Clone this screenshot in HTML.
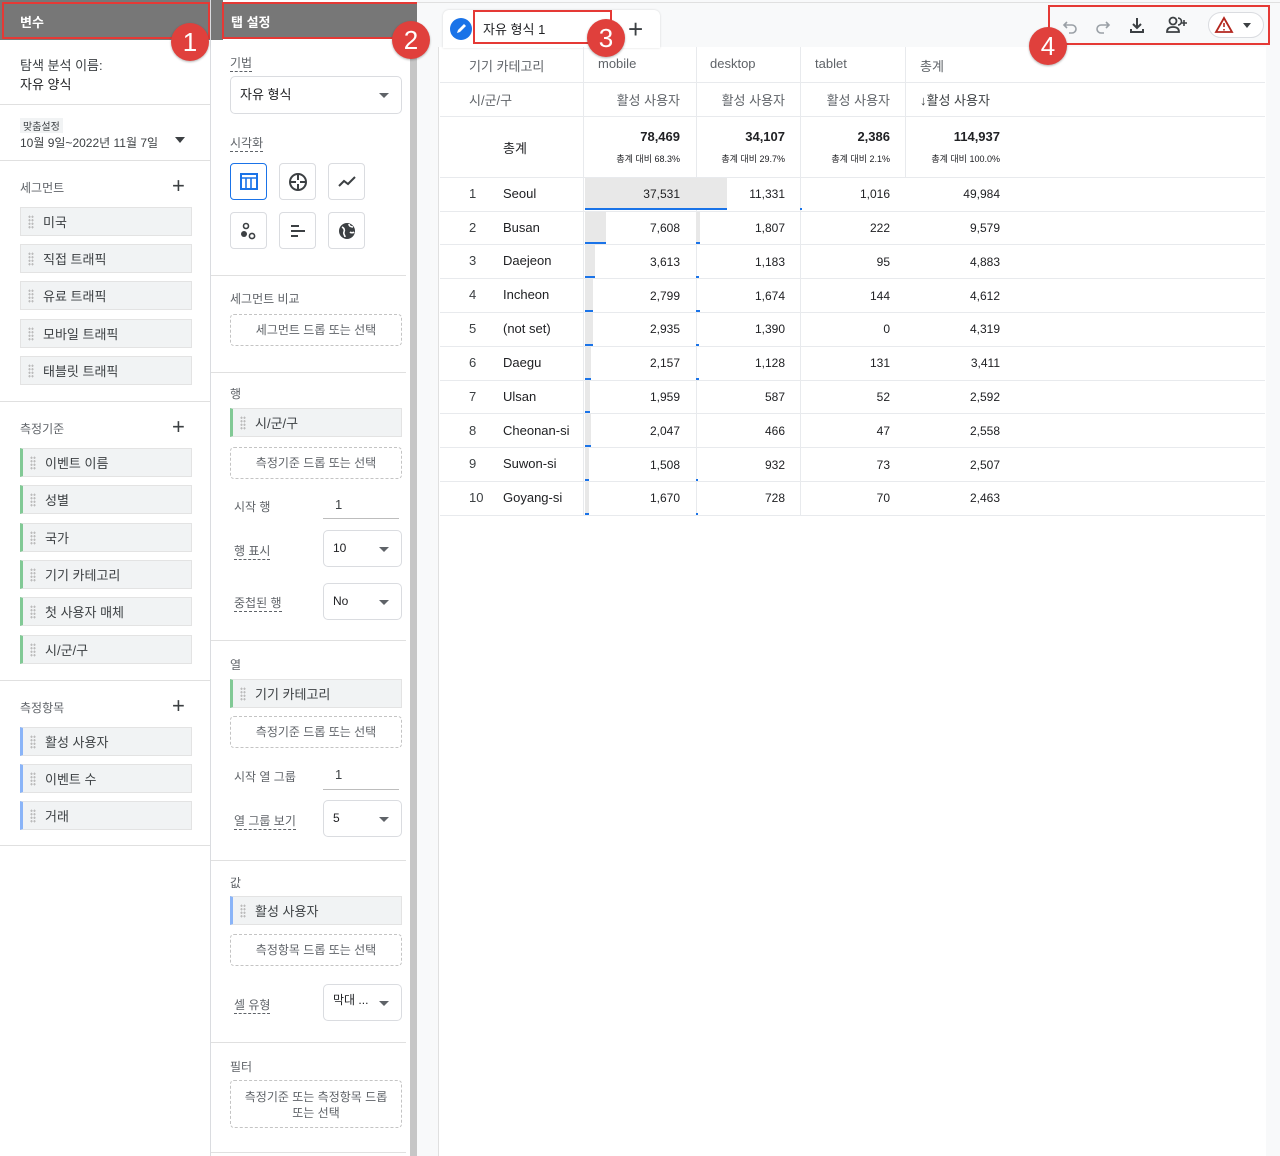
<!DOCTYPE html>
<html><head><meta charset="utf-8">
<style>
*{box-sizing:border-box;margin:0;padding:0}
body{width:1280px;height:1156px;position:relative;overflow:hidden;background:#fff;font-family:"Liberation Sans","Noto Sans CJK KR",sans-serif;font-size:13px;color:#3c4043}
.a{position:absolute;white-space:nowrap}
.hdr{position:absolute;background:#777;color:#fff;font-weight:bold;font-size:13px;border:2px solid #e53935;padding:8px 0 0 16px}
.badge{position:absolute;width:38px;height:38px;border-radius:50%;background:#e0403c;color:#fff;font-size:26px;text-align:center;line-height:38px;box-shadow:0 1px 2px rgba(0,0,0,.3)}
.div{position:absolute;height:1px;background:#e0e0e0}
.lbl{font-size:12px;color:#5f6368}
.item{position:absolute;height:29px;background:#f1f3f4;border:1px solid #e3e3e3;font-size:13px;color:#3c4043;padding:4px 0 0 22px}
.item:before{content:"";position:absolute;left:7px;top:7px;width:6px;height:14px;background:radial-gradient(circle,#bbb 1px,transparent 1.2px) 0 0/3px 3.5px}
.g{border-left:3px solid #81c995}
.b{border-left:3px solid #8ab4f8}
.dash{position:absolute;border:1px dashed #c4c4c4;border-radius:4px;text-align:center;font-size:12px;color:#5f6368}
.sel{position:absolute;border:1px solid #dadce0;border-radius:5px;padding-left:9px;font-size:12px;color:#202124}
.sel:after{content:"";position:absolute;right:12px;top:50%;margin-top:-2px;border:5px solid transparent;border-top:5px solid #5f6368}
.ul{border-bottom:1px dashed #5f6368;padding-bottom:1px}
.ib{position:absolute;width:37px;height:37px;border:1px solid #dadce0;border-radius:4px}
.plus{position:absolute;font-size:22px;color:#3c4043;line-height:20px;font-weight:300}
.hl{position:absolute;left:440px;width:825px;height:1px;background:#e8eaed}
.vl{position:absolute;width:1px;background:#e8eaed}
.num{position:absolute;text-align:right;font-size:12px;color:#202124}
.bar{position:absolute;background:#e8e8e8}
.bl{position:absolute;height:2px;background:#1a73e8}
</style></head><body>

<!-- left panel -->
<div class="a" style="left:0;top:0;width:211px;height:40px;background:#777"></div>
<div class="a" style="left:211px;top:0;width:12px;height:40px;background:#777"></div>
<div class="a" style="left:210px;top:0;width:1px;height:1156px;background:#dadce0"></div>
<div class="hdr" style="left:2px;top:2px;width:208px;height:37px">변수</div>
<div class="a" style="left:20px;top:55px">탐색 분석 이름:</div>
<div class="a" style="left:20px;top:74px;color:#202124">자유 양식</div>
<div class="div" style="left:0;top:104px;width:210px"></div>
<div class="a" style="left:20px;top:118px;font-size:10px;background:#f1f3f4;padding:0 3px;color:#3c4043">맞춤설정</div>
<div class="a" style="left:20px;top:134px;font-size:12px;color:#3c4043">10월 9일~2022년 11월 7일</div>
<div class="a" style="left:175px;top:137px;border:5px solid transparent;border-top:6px solid #3c4043"></div>
<div class="div" style="left:0;top:160px;width:210px"></div>
<div class="a lbl" style="left:20px;top:179px">세그먼트</div><div class="plus" style="left:172px;top:176px">+</div>
<div class="item" style="left:20px;top:207px;width:172px">미국</div>
<div class="item" style="left:20px;top:244px;width:172px">직접 트래픽</div>
<div class="item" style="left:20px;top:281px;width:172px">유료 트래픽</div>
<div class="item" style="left:20px;top:319px;width:172px">모바일 트래픽</div>
<div class="item" style="left:20px;top:356px;width:172px">태블릿 트래픽</div>
<div class="div" style="left:0;top:401px;width:210px"></div>
<div class="a lbl" style="left:20px;top:420px">측정기준</div><div class="plus" style="left:172px;top:417px">+</div>
<div class="item g" style="left:20px;top:448px;width:172px">이벤트 이름</div>
<div class="item g" style="left:20px;top:485px;width:172px">성별</div>
<div class="item g" style="left:20px;top:523px;width:172px">국가</div>
<div class="item g" style="left:20px;top:560px;width:172px">기기 카테고리</div>
<div class="item g" style="left:20px;top:597px;width:172px">첫 사용자 매체</div>
<div class="item g" style="left:20px;top:635px;width:172px">시/군/구</div>
<div class="div" style="left:0;top:680px;width:210px"></div>
<div class="a lbl" style="left:20px;top:699px">측정항목</div><div class="plus" style="left:172px;top:696px">+</div>
<div class="item b" style="left:20px;top:727px;width:172px">활성 사용자</div>
<div class="item b" style="left:20px;top:764px;width:172px">이벤트 수</div>
<div class="item b" style="left:20px;top:801px;width:172px">거래</div>
<div class="div" style="left:0;top:845px;width:210px"></div>

<!-- panel 2 -->
<div class="hdr" style="left:222px;top:2px;width:198px;height:37px;padding-left:7px">탭 설정</div>
<div class="a" style="left:410px;top:40px;width:7px;height:1116px;background:#c6c6c6"></div>
<div class="a" style="left:417px;top:0;width:21px;height:1156px;background:#f8f9fa"></div>
<div class="a lbl" style="left:230px;top:54px"><span class="ul">기법</span></div>
<div class="sel" style="left:230px;top:76px;width:172px;height:38px;line-height:36px;font-size:13px">자유 형식</div>
<div class="a lbl" style="left:230px;top:134px"><span class="ul">시각화</span></div>
<div class="ib" style="left:230px;top:163px;border-color:#1a73e8"><svg width="37" height="37" viewBox="0 0 37 37"><rect x="10" y="10" width="16" height="15" fill="none" stroke="#1a73e8" stroke-width="2"/><path d="M10 14h16M15 14v11M20 14v11" stroke="#1a73e8" stroke-width="1.6"/></svg></div>
<div class="ib" style="left:279px;top:163px"><svg width="37" height="37" viewBox="0 0 37 37"><circle cx="18" cy="18" r="8" fill="none" stroke="#3c4043" stroke-width="2"/><path d="M18 10v6M18 20v6M10 18h6M20 18h6" stroke="#3c4043" stroke-width="2"/></svg></div>
<div class="ib" style="left:328px;top:163px"><svg width="37" height="37" viewBox="0 0 37 37"><path d="M10 22l5-5 4 3 7-7" fill="none" stroke="#3c4043" stroke-width="2"/></svg></div>
<div class="ib" style="left:230px;top:212px"><svg width="37" height="37" viewBox="0 0 37 37"><circle cx="15" cy="13" r="2.5" fill="none" stroke="#3c4043" stroke-width="1.6"/><circle cx="13" cy="21" r="3" fill="#3c4043"/><circle cx="21" cy="23" r="2.6" fill="none" stroke="#3c4043" stroke-width="1.6"/></svg></div>
<div class="ib" style="left:279px;top:212px"><svg width="37" height="37" viewBox="0 0 37 37"><path d="M11 13h8M11 18h14M11 23h7" stroke="#3c4043" stroke-width="2"/></svg></div>
<div class="ib" style="left:328px;top:212px"><svg width="37" height="37" viewBox="0 0 37 37"><circle cx="18" cy="18" r="8" fill="#3c4043"/><path d="M13 14c2 1 3 3 2 5s1 3 1 5M20 11c0 2 2 3 4 3M21 19c1 1 3 1 4 0" stroke="#fff" stroke-width="1.6" fill="none"/></svg></div>
<div class="div" style="left:211px;top:275px;width:195px"></div>
<div class="a lbl" style="left:230px;top:290px">세그먼트 비교</div>
<div class="dash" style="left:230px;top:314px;width:172px;height:32px;line-height:30px">세그먼트 드롭 또는 선택</div>
<div class="div" style="left:211px;top:372px;width:195px"></div>
<div class="a lbl" style="left:230px;top:385px">행</div>
<div class="item g" style="left:230px;top:408px;width:172px">시/군/구</div>
<div class="dash" style="left:230px;top:447px;width:172px;height:32px;line-height:30px">측정기준 드롭 또는 선택</div>
<div class="a lbl" style="left:234px;top:498px">시작 행</div>
<div class="a" style="left:335px;top:497px;font-size:13px">1</div>
<div class="a" style="left:323px;top:518px;width:76px;height:1px;background:#bdbdbd"></div>
<div class="a lbl" style="left:234px;top:542px"><span class="ul">행 표시</span></div>
<div class="sel" style="left:323px;top:530px;width:79px;height:37px;line-height:35px">10</div>
<div class="a lbl" style="left:234px;top:594px"><span class="ul">중첩된 행</span></div>
<div class="sel" style="left:323px;top:583px;width:79px;height:37px;line-height:35px">No</div>
<div class="div" style="left:211px;top:640px;width:195px"></div>
<div class="a lbl" style="left:230px;top:656px">열</div>
<div class="item g" style="left:230px;top:679px;width:172px">기기 카테고리</div>
<div class="dash" style="left:230px;top:716px;width:172px;height:32px;line-height:30px">측정기준 드롭 또는 선택</div>
<div class="a lbl" style="left:234px;top:768px">시작 열 그룹</div>
<div class="a" style="left:335px;top:767px;font-size:13px">1</div>
<div class="a" style="left:323px;top:789px;width:76px;height:1px;background:#bdbdbd"></div>
<div class="a lbl" style="left:234px;top:812px"><span class="ul">열 그룹 보기</span></div>
<div class="sel" style="left:323px;top:800px;width:79px;height:37px;line-height:35px">5</div>
<div class="div" style="left:211px;top:860px;width:195px"></div>
<div class="a lbl" style="left:230px;top:874px">값</div>
<div class="item b" style="left:230px;top:896px;width:172px">활성 사용자</div>
<div class="dash" style="left:230px;top:934px;width:172px;height:32px;line-height:30px">측정항목 드롭 또는 선택</div>
<div class="a lbl" style="left:234px;top:996px"><span class="ul">셀 유형</span></div>
<div class="sel" style="left:323px;top:984px;width:79px;height:37px;line-height:30px;font-size:12px">막대 ...</div>
<div class="div" style="left:211px;top:1042px;width:195px"></div>
<div class="a lbl" style="left:230px;top:1058px">필터</div>
<div class="dash" style="left:230px;top:1080px;width:172px;height:48px;padding-top:8px;line-height:16px;white-space:normal">측정기준 또는 측정항목 드롭<br>또는 선택</div>
<div class="div" style="left:211px;top:1152px;width:195px"></div>

<!-- main -->
<div class="a" style="left:438px;top:0;width:842px;height:47px;background:#f8f9fa"></div>
<div class="a" style="left:417px;top:2px;width:863px;height:1px;background:#e0e0e0"></div>
<div class="a" style="left:1266px;top:47px;width:14px;height:1109px;background:#f8f9fa"></div>
<div class="a" style="left:438px;top:47px;width:1px;height:1109px;background:#e0e0e0"></div>
<div class="a" style="left:443px;top:10px;width:217px;height:38px;background:#fff;border-radius:6px 6px 0 0;box-shadow:0 0 2px rgba(0,0,0,.15)"></div>
<div class="a" style="left:450px;top:18px;width:22px;height:22px;border-radius:50%;background:#1a73e8"><svg width="22" height="22" viewBox="0 0 22 22"><path d="M7 15l1-3 6-6 2 2-6 6z" fill="#fff"/></svg></div>
<div class="a" style="left:473px;top:10px;width:139px;height:34px;border:2px solid #e53935"></div>
<div class="a" style="left:483px;top:19px;color:#202124">자유 형식 1</div>
<div class="plus" style="left:628px;top:19px;font-size:26px">+</div>
<div class="a" style="left:1048px;top:5px;width:222px;height:40px;border:2px solid #e53935"></div>
<svg class="a" style="left:1060px;top:16px" width="20" height="20" viewBox="0 0 20 20"><path d="M7 6L4 9l3 3M4 9h8a4 4 0 010 8H9" fill="none" stroke="#9aa0a6" stroke-width="1.6"/></svg>
<svg class="a" style="left:1093px;top:16px" width="20" height="20" viewBox="0 0 20 20"><path d="M13 6l3 3-3 3M16 9H8a4 4 0 000 8h3" fill="none" stroke="#9aa0a6" stroke-width="1.6"/></svg>
<svg class="a" style="left:1127px;top:15px" width="20" height="20" viewBox="0 0 20 20"><path d="M10 3v10M6 9l4 4 4-4M4 14v3h12v-3" fill="none" stroke="#3c4043" stroke-width="2"/></svg>
<svg class="a" style="left:1165px;top:15px" width="24" height="20" viewBox="0 0 24 20"><circle cx="8" cy="6" r="3.5" fill="none" stroke="#3c4043" stroke-width="1.8"/><path d="M2 17c0-4 3-5 6-5s6 1 6 5z" fill="none" stroke="#3c4043" stroke-width="1.8"/><path d="M13 3a3.5 3.5 0 010 7M19 5v6M16 8h6" stroke="#3c4043" stroke-width="1.6" fill="none"/></svg>
<div class="a" style="left:1208px;top:12px;width:56px;height:26px;border:1px solid #dadce0;border-radius:13px;background:#fff"></div>
<svg class="a" style="left:1214px;top:16px" width="20" height="18" viewBox="0 0 20 18"><path d="M10 2L18 16H2z" fill="none" stroke="#b3261e" stroke-width="1.8"/><path d="M10 7v4M10 13v1.5" stroke="#b3261e" stroke-width="1.6"/></svg>
<div class="a" style="left:1243px;top:23px;border:4px solid transparent;border-top:5px solid #3c4043"></div>

<div class="badge" style="left:171px;top:23px">1</div>
<div class="badge" style="left:392px;top:21px">2</div>
<div class="badge" style="left:587px;top:19px">3</div>
<div class="badge" style="left:1029px;top:27px">4</div>

<!-- table lines -->
<div class="hl" style="top:82px"></div><div class="hl" style="top:116px"></div><div class="hl" style="top:177px"></div>
<div class="hl" style="top:211px"></div><div class="hl" style="top:244px"></div><div class="hl" style="top:278px"></div><div class="hl" style="top:312px"></div><div class="hl" style="top:346px"></div><div class="hl" style="top:380px"></div><div class="hl" style="top:413px"></div><div class="hl" style="top:447px"></div><div class="hl" style="top:481px"></div><div class="hl" style="top:515px"></div>
<div class="vl" style="left:583px;top:47px;height:130px"></div>
<div class="vl" style="left:696px;top:47px;height:130px"></div>
<div class="vl" style="left:800px;top:47px;height:130px"></div>
<div class="vl" style="left:905px;top:47px;height:130px"></div>
<div class="vl" style="left:583px;top:177px;height:338px"></div>
<div class="vl" style="left:696px;top:177px;height:338px"></div>
<div class="vl" style="left:800px;top:177px;height:338px"></div>

<div class="a" style="left:469px;top:56px;color:#5f6368">기기 카테고리</div>
<div class="a" style="left:598px;top:56px;color:#5f6368">mobile</div>
<div class="a" style="left:710px;top:56px;color:#5f6368">desktop</div>
<div class="a" style="left:815px;top:56px;color:#5f6368">tablet</div>
<div class="a" style="left:920px;top:56px;color:#5f6368">총계</div>
<div class="a" style="left:469px;top:90px;color:#5f6368">시/군/구</div>
<div class="num" style="left:580px;width:100px;top:90px;font-size:13px;color:#5f6368">활성 사용자</div>
<div class="num" style="left:685px;width:100px;top:90px;font-size:13px;color:#5f6368">활성 사용자</div>
<div class="num" style="left:790px;width:100px;top:90px;font-size:13px;color:#5f6368">활성 사용자</div>
<div class="a" style="left:920px;top:90px;color:#3c4043">↓활성 사용자</div>
<div class="a" style="left:503px;top:138px;color:#202124">총계</div>
<div class="num" style="left:580px;width:100px;top:129px;font-weight:bold;font-size:13px">78,469</div>
<div class="num" style="left:685px;width:100px;top:129px;font-weight:bold;font-size:13px">34,107</div>
<div class="num" style="left:790px;width:100px;top:129px;font-weight:bold;font-size:13px">2,386</div>
<div class="num" style="left:900px;width:100px;top:129px;font-weight:bold;font-size:13px">114,937</div>
<div class="num" style="left:580px;width:100px;top:152px;font-size:9px">총계 대비 68.3%</div>
<div class="num" style="left:685px;width:100px;top:152px;font-size:9px">총계 대비 29.7%</div>
<div class="num" style="left:790px;width:100px;top:152px;font-size:9px">총계 대비 2.1%</div>
<div class="num" style="left:900px;width:100px;top:152px;font-size:9px">총계 대비 100.0%</div>

<!-- bars -->
<div class="bar" style="left:585px;top:178px;width:142px;height:31px"></div><div class="bl" style="left:585px;top:208px;width:142px"></div><div class="bl" style="left:800px;top:208px;width:2px"></div>
<div class="bar" style="left:585px;top:212px;width:21px;height:30px"></div><div class="bl" style="left:585px;top:242px;width:21px"></div><div class="bar" style="left:696px;top:212px;width:4px;height:30px"></div><div class="bl" style="left:696px;top:242px;width:4px"></div>
<div class="bar" style="left:585px;top:245px;width:10px;height:31px"></div><div class="bl" style="left:585px;top:276px;width:10px"></div><div class="bl" style="left:696px;top:276px;width:3px"></div>
<div class="bar" style="left:585px;top:279px;width:8px;height:31px"></div><div class="bl" style="left:585px;top:310px;width:8px"></div><div class="bl" style="left:696px;top:310px;width:4px"></div>
<div class="bar" style="left:585px;top:313px;width:8px;height:31px"></div><div class="bl" style="left:585px;top:344px;width:8px"></div><div class="bl" style="left:696px;top:344px;width:3px"></div>
<div class="bar" style="left:585px;top:347px;width:6px;height:31px"></div><div class="bl" style="left:585px;top:378px;width:6px"></div><div class="bl" style="left:696px;top:378px;width:3px"></div>
<div class="bar" style="left:585px;top:381px;width:5px;height:30px"></div><div class="bl" style="left:585px;top:411px;width:5px"></div>
<div class="bar" style="left:585px;top:414px;width:6px;height:31px"></div><div class="bl" style="left:585px;top:445px;width:6px"></div>
<div class="bar" style="left:585px;top:448px;width:4px;height:31px"></div><div class="bl" style="left:585px;top:479px;width:4px"></div><div class="bl" style="left:696px;top:479px;width:2px"></div>
<div class="bar" style="left:585px;top:482px;width:4px;height:31px"></div><div class="bl" style="left:585px;top:513px;width:4px"></div><div class="bl" style="left:696px;top:513px;width:2px"></div>

<!-- rows -->
<div class="a" style="left:469px;top:186px">1</div><div class="a" style="left:503px;top:186px;color:#202124">Seoul</div>
<div class="num" style="left:580px;width:100px;top:187px">37,531</div><div class="num" style="left:685px;width:100px;top:187px">11,331</div><div class="num" style="left:790px;width:100px;top:187px">1,016</div><div class="num" style="left:900px;width:100px;top:187px">49,984</div>
<div class="a" style="left:469px;top:220px">2</div><div class="a" style="left:503px;top:220px;color:#202124">Busan</div>
<div class="num" style="left:580px;width:100px;top:221px">7,608</div><div class="num" style="left:685px;width:100px;top:221px">1,807</div><div class="num" style="left:790px;width:100px;top:221px">222</div><div class="num" style="left:900px;width:100px;top:221px">9,579</div>
<div class="a" style="left:469px;top:253px">3</div><div class="a" style="left:503px;top:253px;color:#202124">Daejeon</div>
<div class="num" style="left:580px;width:100px;top:255px">3,613</div><div class="num" style="left:685px;width:100px;top:255px">1,183</div><div class="num" style="left:790px;width:100px;top:255px">95</div><div class="num" style="left:900px;width:100px;top:255px">4,883</div>
<div class="a" style="left:469px;top:287px">4</div><div class="a" style="left:503px;top:287px;color:#202124">Incheon</div>
<div class="num" style="left:580px;width:100px;top:289px">2,799</div><div class="num" style="left:685px;width:100px;top:289px">1,674</div><div class="num" style="left:790px;width:100px;top:289px">144</div><div class="num" style="left:900px;width:100px;top:289px">4,612</div>
<div class="a" style="left:469px;top:321px">5</div><div class="a" style="left:503px;top:321px;color:#202124">(not set)</div>
<div class="num" style="left:580px;width:100px;top:322px">2,935</div><div class="num" style="left:685px;width:100px;top:322px">1,390</div><div class="num" style="left:790px;width:100px;top:322px">0</div><div class="num" style="left:900px;width:100px;top:322px">4,319</div>
<div class="a" style="left:469px;top:355px">6</div><div class="a" style="left:503px;top:355px;color:#202124">Daegu</div>
<div class="num" style="left:580px;width:100px;top:356px">2,157</div><div class="num" style="left:685px;width:100px;top:356px">1,128</div><div class="num" style="left:790px;width:100px;top:356px">131</div><div class="num" style="left:900px;width:100px;top:356px">3,411</div>
<div class="a" style="left:469px;top:389px">7</div><div class="a" style="left:503px;top:389px;color:#202124">Ulsan</div>
<div class="num" style="left:580px;width:100px;top:390px">1,959</div><div class="num" style="left:685px;width:100px;top:390px">587</div><div class="num" style="left:790px;width:100px;top:390px">52</div><div class="num" style="left:900px;width:100px;top:390px">2,592</div>
<div class="a" style="left:469px;top:423px">8</div><div class="a" style="left:503px;top:423px;color:#202124">Cheonan-si</div>
<div class="num" style="left:580px;width:100px;top:424px">2,047</div><div class="num" style="left:685px;width:100px;top:424px">466</div><div class="num" style="left:790px;width:100px;top:424px">47</div><div class="num" style="left:900px;width:100px;top:424px">2,558</div>
<div class="a" style="left:469px;top:456px">9</div><div class="a" style="left:503px;top:456px;color:#202124">Suwon-si</div>
<div class="num" style="left:580px;width:100px;top:458px">1,508</div><div class="num" style="left:685px;width:100px;top:458px">932</div><div class="num" style="left:790px;width:100px;top:458px">73</div><div class="num" style="left:900px;width:100px;top:458px">2,507</div>
<div class="a" style="left:469px;top:490px">10</div><div class="a" style="left:503px;top:490px;color:#202124">Goyang-si</div>
<div class="num" style="left:580px;width:100px;top:491px">1,670</div><div class="num" style="left:685px;width:100px;top:491px">728</div><div class="num" style="left:790px;width:100px;top:491px">70</div><div class="num" style="left:900px;width:100px;top:491px">2,463</div>
</body></html>
